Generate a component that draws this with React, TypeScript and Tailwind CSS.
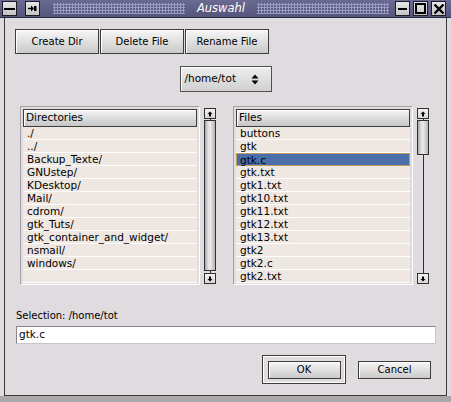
import React from "react";

const DIRS = [
  "./",
  "../",
  "Backup_Texte/",
  "GNUstep/",
  "KDesktop/",
  "Mail/",
  "cdrom/",
  "gtk_Tuts/",
  "gtk_container_and_widget/",
  "nsmail/",
  "windows/",
  "",
];

const FILES = [
  "buttons",
  "gtk",
  "gtk.c",
  "gtk.txt",
  "gtk1.txt",
  "gtk10.txt",
  "gtk11.txt",
  "gtk12.txt",
  "gtk13.txt",
  "gtk2",
  "gtk2.c",
  "gtk2.txt",
];

function TitleButton({ children }: { children: React.ReactNode }) {
  return (
    <div className="flex h-[15px] w-[15px] items-center justify-center border border-[#1c1c28] bg-[linear-gradient(#e6e6e6,#c4c4c4)]">
      {children}
    </div>
  );
}

function Dots() {
  return (
    <div className="h-[11px] flex-1 bg-[radial-gradient(circle,#9a9ac2_1px,transparent_1.3px)] bg-[length:3px_3px]" />
  );
}

function TitleBar() {
  return (
    <div className="flex h-[18px] items-center border-b border-[#2a2a40] bg-[linear-gradient(#6a6a92,#55557c)] pl-[2px] pr-[5px]">
      <TitleButton>
        <div className="h-[2px] w-[11px] bg-black" />
      </TitleButton>
      <div className="ml-[8px]">
        <TitleButton>
          <svg width="11" height="9" viewBox="0 0 11 9">
            <path d="M1 4.5h5" stroke="black" strokeWidth="1.5" />
            <path d="M4 1.5l3 3-3 3z" fill="black" />
            <path d="M7 2h2.5v5H7z" fill="black" />
          </svg>
        </TitleButton>
      </div>
      <div className="ml-[13px] flex flex-1 items-center">
        <Dots />
        <span className="px-[12px] text-[11.5px] italic leading-none text-white font-['DejaVu_Sans',sans-serif]">
          Auswahl
        </span>
        <Dots />
      </div>
      <div className="ml-[6px] flex gap-[3px]">
        <TitleButton>
          <div className="mt-[1px] h-[2px] w-[9px] bg-black" />
        </TitleButton>
        <TitleButton>
          <div className="h-[11px] w-[11px] border-2 border-black" />
        </TitleButton>
        <TitleButton>
          <svg width="12" height="12" viewBox="0 0 12 12">
            <path d="M1.5 1.5l9 9M10.5 1.5l-9 9" stroke="black" strokeWidth="2.4" />
          </svg>
        </TitleButton>
      </div>
    </div>
  );
}

function Button({ label, w = "w-[84px]", h = "h-[25px]" }: { label: string; w?: string; h?: string }) {
  return (
    <div
      className={`${w} ${h} flex items-center justify-center border border-[#3c3c3c] bg-[linear-gradient(#f6f6f6,#cacaca)] shadow-[inset_1px_1px_0_#ffffff] text-[10px] text-black`}
    >
      {label}
    </div>
  );
}

function Arrow({ down }: { down?: boolean }) {
  return (
    <div className="flex h-[11px] w-[12px] items-center justify-center border border-[#303030] bg-[linear-gradient(#f2f2f2,#d6d6d6)]">
      <svg width="6" height="6" viewBox="0 0 6 6" className={down ? "rotate-180" : ""}>
        <path d="M3 0.5L5.5 3H0.5z" fill="black" />
        <path d="M2 3h2v2.5H2z" fill="black" />
      </svg>
    </div>
  );
}

function Line({ h }: { h?: string }) {
  return <div className={`mx-auto w-px bg-[#303030] ${h ?? "flex-1"}`} />;
}

function Thumb({ h }: { h: string }) {
  return (
    <div
      className={`${h} w-[12px] border border-[#303030] bg-[linear-gradient(90deg,#a8a8a8,#e4e4e4_35%,#e8e8e8_55%,#b4b4b4)]`}
    />
  );
}

function Scrollbar({ full }: { full?: boolean }) {
  return (
    <div className="mt-[2px] flex h-[176px] w-[12px] flex-col">
      <Arrow />
      <Line h="h-[1px]" />
      {full ? (
        <>
          <Thumb h="flex-1" />
          <Line h="h-[2px]" />
        </>
      ) : (
        <>
          <Thumb h="h-[35px]" />
          <Line />
        </>
      )}
      <Arrow down />
    </div>
  );
}

function List({ title, rows, selected }: { title: string; rows: string[]; selected?: string }) {
  return (
    <div className="w-[180px] border-t border-l border-b border-r border-t-[#a4a2a6] border-l-[#a4a2a6] border-b-white border-r-white px-[2px] pt-[2px] pb-[1px]">
      <div className="flex h-[18px] items-center border border-[#3c3c3c] bg-[linear-gradient(#f4f4f4,#c6c6c6)] shadow-[inset_1px_1px_0_#ffffff] pl-[2px] text-[10.5px] text-black">
        {title}
      </div>
      {rows.map((r, i) =>
        r === selected ? (
          <div
            key={i}
            className="flex h-[13px] items-center border border-[#c49a5c] bg-[#4a6ea9] pl-[3px] pt-[1px] text-[10.5px] leading-none text-black"
          >
            {r}
          </div>
        ) : (
          <div
            key={i}
            className="flex h-[13px] items-center border-b border-white bg-[#efe7e1] pl-[4px] pt-[1px] text-[10.5px] leading-none text-black"
          >
            {r}
          </div>
        ),
      )}
    </div>
  );
}

export default function App() {
  return (
    <div className="flex h-[402px] w-[451px] flex-col overflow-hidden bg-[#dfdbdf] font-['DejaVu_Sans',sans-serif]">
      <TitleBar />
      <div className="mx-[4px] flex flex-1 flex-col border-l border-r border-b border-[#3a3a3a] pl-[10px] pt-[11px]">
        <div className="flex gap-[1px]">
          <Button label="Create Dir" />
          <Button label="Delete File" />
          <Button label="Rename File" />
        </div>

        <div className="mt-[12px] flex justify-center pr-[10px]">
          <div className="flex h-[26px] w-[92px] items-center justify-between border border-[#505050] bg-[linear-gradient(#eeeeee,#d0d0d0)] shadow-[inset_1px_1px_0_#ffffff] pl-[4px] pr-[12px] text-[10.5px] text-black">
            <span>/home/tot</span>
            <svg width="8" height="11" viewBox="0 0 8 11">
              <path d="M4 0.5L7.5 4.5H0.5z" fill="black" />
              <path d="M4 10.5L7.5 6.5H0.5z" fill="black" />
            </svg>
          </div>
        </div>

        <div className="mt-[14px] flex pl-[5px]">
          <List title="Directories" rows={DIRS} />
          <div className="ml-[4px]">
            <Scrollbar full />
          </div>
          <div className="ml-[17px]">
            <List title="Files" rows={FILES} selected="gtk.c" />
          </div>
          <div className="ml-[4px]">
            <Scrollbar />
          </div>
        </div>

        <div className="mt-[25px] ml-[1px] text-[10px] leading-[12px] text-black">Selection: /home/tot</div>
        <div className="mt-[4px] ml-[1px] flex h-[18px] w-[420px] items-center border border-t-[#8a888c] border-l-[#8a888c] border-b-[#c8c6ca] border-r-[#c8c6ca] bg-white pl-[2px] text-[10.5px] text-black">
          gtk.c
        </div>

        <div className="mt-[11px] flex justify-end gap-[12px] pr-[15px]">
          <div className="flex h-[29px] w-[84px] items-center justify-center border border-[#3c3c3c] shadow-[inset_1px_1px_0_#ffffff,inset_-1px_-1px_0_#ffffff]">
            <Button label="OK" w="w-[73px]" h="h-[18px]" />
          </div>
          <div className="flex h-[29px] items-center">
            <Button label="Cancel" w="w-[73px]" h="h-[18px]" />
          </div>
        </div>
      </div>
      <div className="h-[6px] bg-[#a9a7aa]" />
    </div>
  );
}
